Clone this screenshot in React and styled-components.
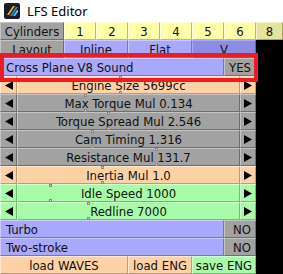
import React from "react";
import styled, { createGlobalStyle } from "styled-components";

const GlobalStyle = createGlobalStyle`
  html, body {
    margin: 0;
    padding: 0;
    background: #ffffff;
  }
  #root {
    width: 283px;
    height: 274px;
    overflow: hidden;
  }
`;

const tones = {
  gray: { bg: "#a2a2a2", hi: "#c4c4c4", lo: "#6e6e6e" },
  yellow: { bg: "#ffffaa", hi: "#ffffd8", lo: "#b8b878" },
  yellowSel: { bg: "#e4e49c", hi: "#f4f4c4", lo: "#a4a470" },
  purple: { bg: "#a8a8fc", hi: "#cacaff", lo: "#7474c0" },
  purpleSel: { bg: "#8c8ce4", hi: "#aaaaf4", lo: "#6262a8" },
  orange: { bg: "#ffd2a6", hi: "#ffe8d0", lo: "#c09a74" },
  green: { bg: "#a8fca8", hi: "#d0ffd0", lo: "#74bc74" },
};

const sliders = [
  { label: "Engine Size 5699cc", tone: "orange", tick: 118 },
  { label: "Max Torque Mul 0.134", tone: "gray", tick: 83 },
  { label: "Torque Spread Mul 2.546", tone: "gray", tick: 106 },
  { label: "Cam Timing 1.316", tone: "gray", tick: 90 },
  { label: "Resistance Mul 131.7", tone: "gray", tick: 154 },
  { label: "Inertia Mul 1.0", tone: "orange", tick: 100 },
  { label: "Idle Speed 1000", tone: "green", tick: 48 },
  { label: "Redline 7000", tone: "green", tick: 86 },
];

const Window = styled.div`
  width: 283px;
  height: 274px;
  display: flex;
  flex-direction: column;
  background: #000000;
  font-family: "DejaVu Sans Condensed", "DejaVu Sans", sans-serif;
`;

const TitleBar = styled.div`
  height: 22px;
  flex: none;
  display: flex;
  align-items: center;
  gap: 7px;
  padding-left: 4px;
  background: #ffffff;
  font-family: "Noto Sans", "Open Sans", sans-serif;
  font-size: 13px;
  color: #000000;
`;

const Panel = styled.div`
  position: relative;
  display: flex;
  flex-direction: column;
`;

const Row = styled.div`
  display: flex;
  height: 18px;
  width: ${(p) => p.$width || 256}px;
`;

const Cell = styled.div`
  box-sizing: border-box;
  position: relative;
  height: 18px;
  width: ${(p) => (p.$w ? `${p.$w}px` : "auto")};
  flex: ${(p) => (p.$w ? "none" : "1")};
  display: flex;
  align-items: center;
  justify-content: ${(p) => p.$align || "center"};
  padding: ${(p) => (p.$align === "flex-start" ? "0 0 0 5px" : p.$align === "flex-end" ? "0 4px 0 0" : "0")};
  background: ${(p) => tones[p.$tone].bg};
  border-top: 1px solid ${(p) => tones[p.$tone].hi};
  border-left: 1px solid ${(p) => tones[p.$tone].hi};
  border-bottom: 1px solid ${(p) => tones[p.$tone].lo};
  border-right: 1px solid ${(p) => tones[p.$tone].lo};
  font-size: 13px;
  color: #111111;
  white-space: nowrap;
`;

const Tick = styled.span`
  position: absolute;
  width: 3px;
  height: 3px;
  background: #dcdcdc;
  border: 1px solid #8a8a8a;
  box-sizing: border-box;
  ${(p) => (p.$bottom ? "bottom: -1px;" : "top: -1px;")}
`;

const Highlight = styled.div`
  position: absolute;
  left: 0;
  top: 31px;
  width: 258px;
  height: 29px;
  box-sizing: border-box;
  border: 4px solid #ec1c24;
  pointer-events: none;
`;

const Logo = () => (
  <svg width="16" height="16" viewBox="0 0 16 16">
    <rect x="0" y="0" width="16" height="16" rx="2" fill="#1c1c28" />
    <path d="M3 12 L9 3 L11 3 L5 12 Z" fill="#f0c020" />
    <path d="M6 13 L12 4 L14 4 L8 13 Z" fill="#2e8fe0" />
    <path d="M9 13 L13 7 L14 7 L14 9 L11 13 Z" fill="#6ac0ff" />
  </svg>
);

const Arrow = ({ dir }) => (
  <svg width="8" height="9" viewBox="0 0 8 9">
    {dir === "left" ? (
      <polygon points="8,0 8,9 0,4.5" fill="#000" />
    ) : (
      <polygon points="0,0 0,9 8,4.5" fill="#000" />
    )}
  </svg>
);

const SliderRow = ({ label, tone, tick }) => (
  <Row>
    <Cell $w={17} $tone={tone}>
      <Arrow dir="left" />
    </Cell>
    <Cell $tone={tone}>
      <Tick style={{ left: tick - 17 }} />
      <Tick $bottom style={{ left: tick - 17 }} />
      {label}
    </Cell>
    <Cell $w={16} $tone={tone}>
      <Arrow dir="right" />
    </Cell>
  </Row>
);

export default function App() {
  return (
    <>
      <GlobalStyle />
      <Window>
        <TitleBar>
          <Logo />
          <span>LFS Editor</span>
        </TitleBar>
        <Panel>
          <Row $width={283}>
            <Cell $w={64} $tone="gray">Cylinders</Cell>
            {["1", "2", "3", "4", "5", "6"].map((n) => (
              <Cell key={n} $w={32} $tone="yellow">{n}</Cell>
            ))}
            <Cell $w={27} $tone="yellowSel">8</Cell>
          </Row>
          <Row>
            <Cell $w={64} $tone="gray">Layout</Cell>
            <Cell $w={64} $tone="purple">Inline</Cell>
            <Cell $w={64} $tone="purple">Flat</Cell>
            <Cell $w={64} $tone="purpleSel">V</Cell>
          </Row>
          <Row>
            <Cell $tone="purple" $align="flex-start">Cross Plane V8 Sound</Cell>
            <Cell $w={32} $tone="gray" $align="flex-end">YES</Cell>
          </Row>
          {sliders.map((s) => (
            <SliderRow key={s.label} {...s} />
          ))}
          <Row>
            <Cell $tone="purple" $align="flex-start">Turbo</Cell>
            <Cell $w={32} $tone="gray" $align="flex-end">NO</Cell>
          </Row>
          <Row>
            <Cell $tone="purple" $align="flex-start">Two-stroke</Cell>
            <Cell $w={32} $tone="gray" $align="flex-end">NO</Cell>
          </Row>
          <Row>
            <Cell $w={128} $tone="orange">load WAVES</Cell>
            <Cell $w={64} $tone="orange">load ENG</Cell>
            <Cell $w={64} $tone="green">save ENG</Cell>
          </Row>
          <Highlight />
        </Panel>
      </Window>
    </>
  );
}
